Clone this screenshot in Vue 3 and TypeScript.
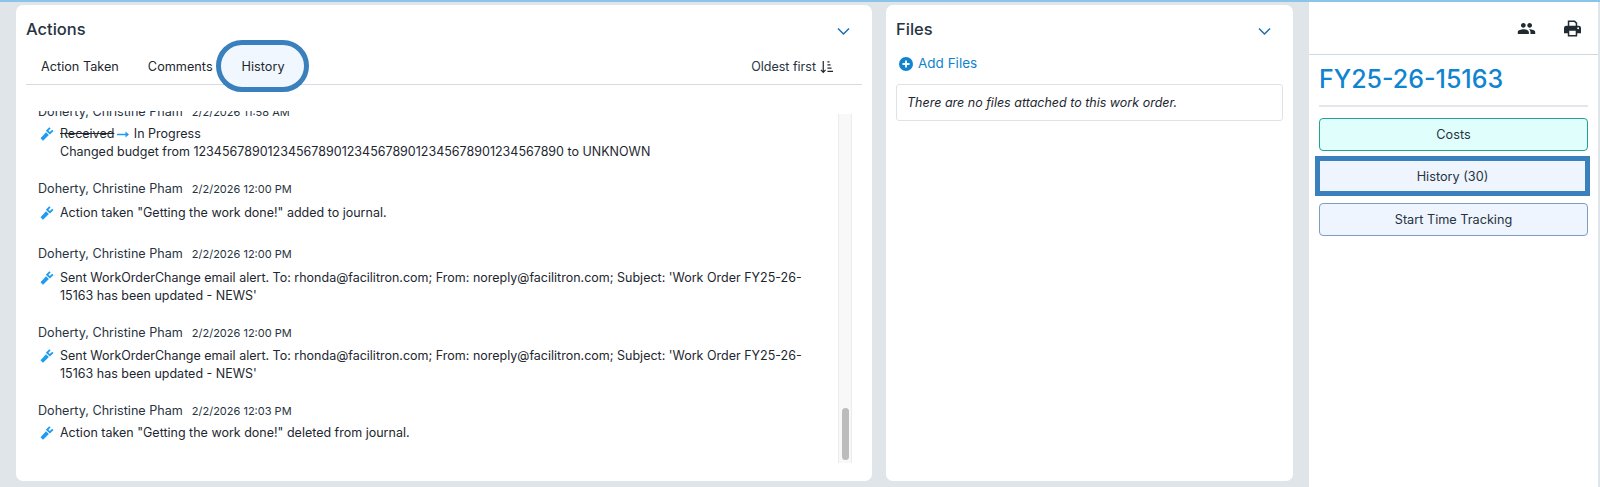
<script setup lang="ts">
interface HistoryEntry {
  time: string
  lines: string[]
}

const alert = "Sent WorkOrderChange email alert. To: rhonda@facilitron.com; From: noreply@facilitron.com; Subject: 'Work Order FY25-26-15163 has been updated - NEWS'"

const entries: HistoryEntry[] = [
  { time: '2/2/2026 12:00 PM', lines: ['Action taken "Getting the work done!" added to journal.'] },
  { time: '2/2/2026 12:00 PM', lines: [alert] },
  { time: '2/2/2026 12:00 PM', lines: [alert] },
  { time: '2/2/2026 12:03 PM', lines: ['Action taken "Getting the work done!" deleted from journal.'] },
]

const budget = '1234567890'.repeat(5)
</script>

<template>
  <div class="page">
    <section class="card actions">
      <header class="card-head">
        <h2>Actions</h2>
        <svg class="chevron" viewBox="0 0 15 9"><path d="M2 1.500 7.500 7 13 1.500" /></svg>
      </header>
      <div class="tabs">
        <button class="tab">Action Taken</button>
        <button class="tab">Comments</button>
        <button class="tab active">History</button>
        <span class="sort">
          Oldest first
          <svg viewBox="0 0 14 14" class="sort-icon">
            <path d="M3.500 .5v12M1 10l2.500 2.700L6 10M8 1.500h2.200M8 4.800h3.400M8 8.100h4.400M8 11.800h6" />
          </svg>
        </span>
      </div>
      <div class="history">
        <div class="scroll">
          <article class="entry first">
            <div class="meta"><b>Doherty, Christine Pham</b><span>2/2/2026 11:58 AM</span></div>
            <div class="body">
              <svg class="wrench" viewBox="0 0 14 14"><path d="M.5 11.200 6 5.200 8.900 8 3 13.700ZM5.800 3.800 9.300.3l1.300 1.100L8.400 3.700l1.400 1.400 2.400-2.300 1.300 1.300-3.600 3.500Z" /></svg>
              <div class="text">
                <div>
                  <s>Received</s>
                  <svg class="arrow" viewBox="0 0 12 7"><path d="M0 2.700h8.500V.5L12 3.500 8.500 6.500V4.300H0Z" /></svg>
                  In Progress
                </div>
                <div>Changed budget from {{ budget }} to UNKNOWN</div>
              </div>
            </div>
          </article>
          <article v-for="(entry, i) in entries" :key="i" class="entry">
            <div class="meta"><b>Doherty, Christine Pham</b><span>{{ entry.time }}</span></div>
            <div class="body">
              <svg class="wrench" viewBox="0 0 14 14"><path d="M.5 11.200 6 5.200 8.900 8 3 13.700ZM5.800 3.800 9.300.3l1.300 1.100L8.400 3.700l1.400 1.400 2.400-2.300 1.300 1.300-3.600 3.500Z" /></svg>
              <div class="text">
                <div v-for="line in entry.lines" :key="line">{{ line }}</div>
              </div>
            </div>
          </article>
        </div>
        <div class="track"><div class="thumb"></div></div>
      </div>
    </section>

    <section class="card files">
      <header class="card-head">
        <h2>Files</h2>
        <svg class="chevron" viewBox="0 0 15 9"><path d="M2 1.500 7.500 7 13 1.500" /></svg>
      </header>
      <a class="add-files">
        <svg viewBox="0 0 14 14"><circle cx="7" cy="7" r="7" /><path d="M7 3.500v7M3.500 7h7" /></svg>
        Add Files
      </a>
      <div class="no-files">There are no files attached to this work order.</div>
    </section>

    <aside class="side">
      <div class="side-top">
        <svg class="people" viewBox="0 0 24 24">
          <path d="M16 11c1.660 0 2.990-1.340 2.990-3S17.660 5 16 5c-1.660 0-3 1.340-3 3s1.340 3 3 3zm-8 0c1.660 0 2.990-1.340 2.990-3S9.660 5 8 5C6.340 5 5 6.340 5 8s1.340 3 3 3zm0 2c-2.330 0-7 1.170-7 3.500V19h14v-2.500c0-2.330-4.670-3.500-7-3.500zm8 0c-.29 0-.62.020-.97.050 1.160.840 1.970 1.970 1.970 3.450V19h6v-2.500c0-2.330-4.670-3.500-7-3.500z" />
        </svg>
        <svg class="printer" viewBox="0 0 18 18">
          <path fill-rule="evenodd" d="M4 .5h7.500L14 3v3h1.500A2.500 2.500 0 0 1 18 8.500V14h-4v3.500H4V14H0V8.500A2.500 2.500 0 0 1 2.500 6H4V.5Zm1.600 1.600V6h6.800V3.700L10.800 2.100H5.600Zm0 9.400v4.400h6.800v-4.400H5.600Zm9.400-3.700a1 1 0 1 0 0 2 1 1 0 0 0 0-2Z" />
        </svg>
      </div>
      <div class="side-body">
        <h1>FY25-26-15163</h1>
        <button class="side-btn costs">Costs</button>
        <button class="side-btn highlighted">History (30)</button>
        <button class="side-btn">Start Time Tracking</button>
      </div>
    </aside>
  </div>
</template>

<style>
html,
body {
  margin: 0;
  background: #e0e5e9;
}
</style>

<style scoped>
.page {
  display: flex;
  box-sizing: border-box;
  height: 487px;
  padding: 5px 2px 6px 16px;
  border-top: 2px solid #8cc3e8;
  background: #e0e5e9;
  font-family: Inter, "Liberation Sans", sans-serif;
  color: #1f2a33;
  overflow: hidden;
}

.card {
  background: #fff;
  border-radius: 7px;
  box-sizing: border-box;
}

.actions {
  flex: none;
  width: 856px;
  margin-top: -2px;
  padding: 0 10px;
  display: flex;
  flex-direction: column;
}

.files {
  flex: none;
  width: 407px;
  margin: -2px 0 0 14px;
  padding: 0 10px;
}

.card-head {
  display: flex;
  align-items: center;
  justify-content: space-between;
  box-sizing: border-box;
  height: 43px;
  padding-top: 5px;
}

h2 {
  margin: 0;
  font-size: 16.5px;
  font-weight: 500;
  color: #27343f;
}

.chevron {
  width: 15px;
  height: 9px;
  margin: 4px 11px 0 0;
  fill: none;
  stroke: #1b6fae;
  stroke-width: 1.5;
}

.tabs {
  flex: none;
  display: flex;
  align-items: center;
  height: 36px;
  border-bottom: 1px solid #d5dbe0;
}

.tab {
  position: relative;
  height: 36px;
  padding: 0 15px;
  border: 0;
  background: none;
  font: 400 12.7px Inter, "Liberation Sans", sans-serif;
  color: #1d2730;
}

.tab:nth-child(2) {
  margin-left: -1px;
}

.tab.active {
  flex: none;
  height: 52px;
  width: 93px;
  margin-left: -12px;
  padding: 0 0 0 2px;
  border: 5px solid #3a80bd;
  border-radius: 26px;
  background: #f1f7fe;
  box-sizing: border-box;
}

.sort {
  display: flex;
  align-items: center;
  gap: 4px;
  margin: 1px 29px 0 auto;
  font-size: 12.5px;
  color: #27343f;
}

.sort-icon {
  width: 13px;
  height: 14px;
  fill: none;
  stroke: #1d2730;
  stroke-width: 1.3;
}

.history {
  position: relative;
  flex: none;
  margin-top: 26px;
  height: 352px;
  overflow: hidden;
}

.scroll {
  width: 790px;
  padding-left: 12px;
  height: 352px;
  overflow: hidden;
}

.entry {
  margin-bottom: 19px;
}

.entry.first {
  margin-top: -8px;
}

.entry.first .body {
  margin-top: 4px;
}

.entry:nth-child(2) {
  margin-bottom: 23px;
}

.entry:nth-child(4) .body {
  margin-top: 5px;
}

.entry:nth-child(5) .body {
  margin-top: 4px;
}

.meta {
  display: flex;
  align-items: baseline;
  gap: 9px;
  height: 18px;
  line-height: 18px;
  color: #27343f;
}

.meta b {
  font-size: 12.6px;
  font-weight: 400;
}

.meta span {
  font-size: 11px;
}

.body {
  display: flex;
  gap: 6px;
  margin-top: 6px;
}

.wrench {
  flex: none;
  width: 14px;
  height: 14px;
  margin: 2px 0 0 2px;
  fill: #1f9bf0;
}

.text {
  font-size: 12.5px;
  line-height: 18px;
  color: #1d2730;
}

.arrow {
  width: 12px;
  height: 7px;
  margin: 0 1px 0 3px;
  fill: #1f9bf0;
}

.track {
  position: absolute;
  top: 3px;
  right: 10px;
  bottom: 0;
  width: 14px;
  background: #f8f8f8;
  border-left: 1px solid #ececec;
  border-right: 1px solid #ececec;
  box-sizing: border-box;
}

.thumb {
  position: absolute;
  left: 3px;
  width: 7px;
  bottom: 3px;
  height: 52px;
  border-radius: 4px;
  background: #bcbcbc;
}

.add-files {
  display: flex;
  align-items: center;
  gap: 5px;
  height: 22px;
  margin-top: 4px;
  padding-left: 3px;
  font-size: 13.5px;
  color: #0f84cf;
}

.add-files svg {
  width: 14px;
  height: 14px;
  margin-top: 2px;
}

.add-files circle {
  fill: #0f84cf;
}

.add-files path {
  stroke: #fff;
  stroke-width: 1.8;
}

.no-files {
  margin-top: 10px;
  height: 37px;
  line-height: 35px;
  padding-left: 10px;
  box-sizing: border-box;
  border: 1px solid #dfe3e7;
  border-radius: 3px;
  font-size: 12.5px;
  font-style: italic;
  color: #1d2730;
}

.side {
  flex: 1;
  margin: -5px 0 -6px 16px;
  background: #fff;
}

.side-top {
  display: flex;
  align-items: center;
  justify-content: flex-end;
  gap: 28px;
  height: 52px;
  padding-right: 17px;
  border-bottom: 1px solid #cfd9e2;
}

.people {
  width: 19px;
  height: 19px;
  fill: #1f2a33;
}

.printer {
  width: 17px;
  height: 17px;
  fill: #1f2a33;
}

.side-body {
  padding: 0 10px;
  display: flex;
  flex-direction: column;
}

h1 {
  margin: 0 0 11px;
  padding: 8px 0 9px;
  border-bottom: 2px solid #e3e7eb;
  font-size: 25px;
  line-height: 33px;
  font-weight: 500;
  color: #0f84cf;
}

.side-btn {
  height: 33px;
  border: 1px solid #7d9dc3;
  border-radius: 4px;
  background: #eef5fe;
  font: 400 12.7px Inter, "Liberation Sans", sans-serif;
  color: #27343f;
}

.side-btn.costs {
  margin-bottom: 5px;
  border-color: #1fa58f;
  background: #e0fffc;
}

.side-btn.highlighted {
  height: 40px;
  margin: 0 -2px 7px -4px;
  border: 5px solid #3a80bd;
  border-radius: 0;
}
</style>
